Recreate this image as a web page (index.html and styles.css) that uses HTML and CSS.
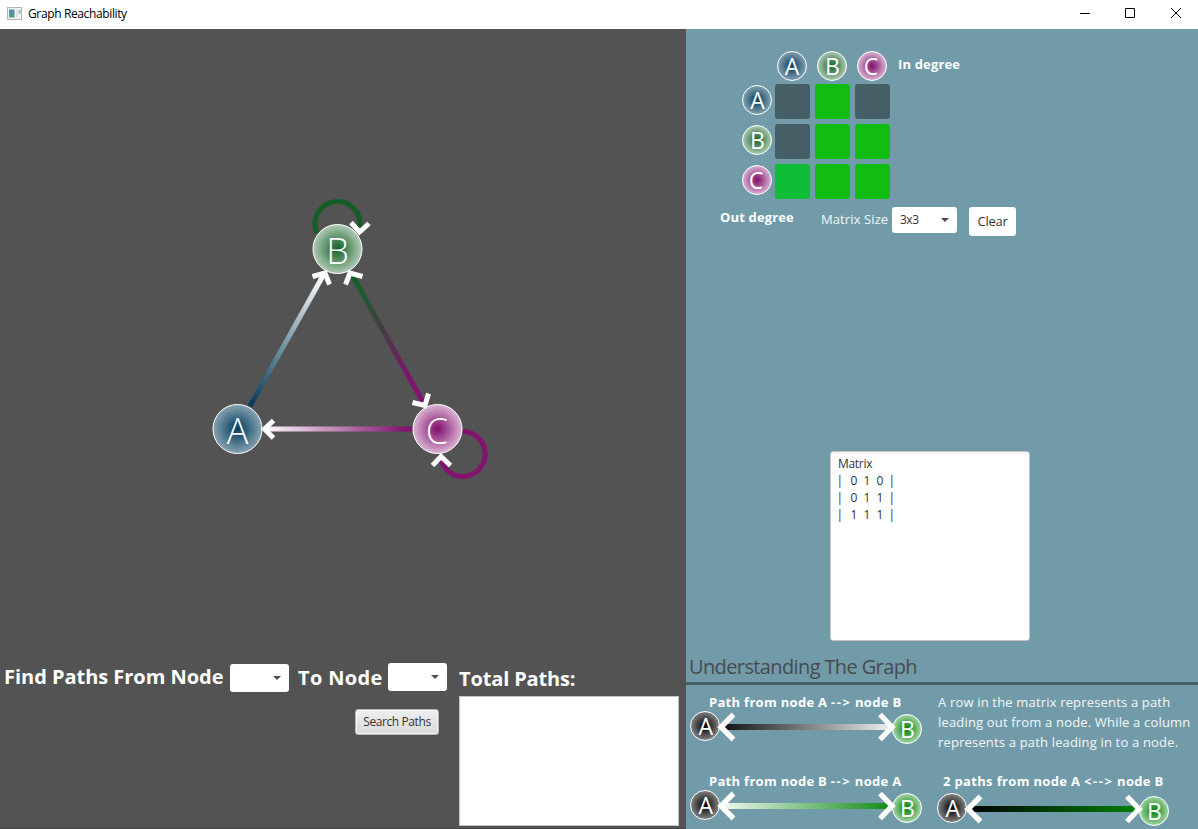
FILE: index.html
```html
<!DOCTYPE html>
<html lang="en">
<head>
<meta charset="utf-8">
<title>Graph Reachability</title>
<link rel="stylesheet" href="styles.css">
</head>
<body>
<svg class="defs" width="0" height="0" aria-hidden="true">
  <defs>
    <radialGradient id="ga"><stop offset="0" stop-color="#0a4060"/><stop offset=".25" stop-color="#205270"/><stop offset="1" stop-color="#87a3b1"/></radialGradient>
    <radialGradient id="gb"><stop offset="0" stop-color="#176327"/><stop offset=".2" stop-color="#2f7440"/><stop offset="1" stop-color="#b0cbb5"/></radialGradient>
    <radialGradient id="gc"><stop offset="0" stop-color="#83126f"/><stop offset=".2" stop-color="#902d7f"/><stop offset="1" stop-color="#dab5d3"/></radialGradient>
    <radialGradient id="gk"><stop offset="0" stop-color="#000"/><stop offset=".25" stop-color="#1c1c1c"/><stop offset="1" stop-color="#858585"/></radialGradient>
    <radialGradient id="gg"><stop offset="0" stop-color="#0b870f"/><stop offset=".25" stop-color="#259429"/><stop offset="1" stop-color="#a8d5aa"/></radialGradient>
    <g id="heads" fill="none" stroke="#fff" stroke-width="5.4"><path d="M733.5 714.5L721 727L733.5 739.5M880 714.5L892 727L880 739.5"/></g>
    <g id="ends">
      <circle cx="705" cy="726" r="14.5" fill="url(#gk)" stroke="#fff"/>
      <circle cx="907" cy="729" r="14.5" fill="url(#gg)" stroke="#fff"/>
      <text class="small-letter" x="705.8" y="734.5">A</text>
      <text class="small-letter" x="907.500" y="737.5">B</text>
    </g>
  </defs>
</svg>

<header class="titlebar">
  <svg class="app-icon" width="15" height="13" viewBox="0 0 15 13">
    <defs><linearGradient id="ic" x2="0" y2="1"><stop stop-color="#5a86b8"/><stop offset="1" stop-color="#4ba37c"/></linearGradient></defs>
    <rect x=".5" y=".5" width="14" height="12" fill="#f4f4f4" stroke="#b0b4b8"/>
    <rect x="2" y="2.5" width="5.5" height="8" fill="url(#ic)"/>
    <rect x="8.500" y="2.500" width="3" height="8" fill="#dfe3e6"/>
    <rect x="12" y="3" width="1.500" height="3.500" fill="#7cb79c"/>
  </svg>
  <span class="app-name">Graph Reachability</span>
  <svg class="win-buttons" width="104" height="12" viewBox="0 0 104 12" fill="none" stroke="#000">
    <path d="M0 6.500H10M45.500 1.500H54.500V10.500H45.500Z"/><path d="M91 1L101 11M101 1L91 11"/>
  </svg>
</header>

<main class="app">
  <section class="left">
    <svg class="graph" width="686" height="620" viewBox="0 29 686 620">
      <defs>
        <linearGradient id="lab" gradientUnits="userSpaceOnUse" x1="250" y1="406" x2="324" y2="275"><stop offset="0" stop-color="#04395b"/><stop offset="1" stop-color="#fff"/></linearGradient>
        <linearGradient id="lbc" gradientUnits="userSpaceOnUse" x1="350" y1="273" x2="425" y2="406"><stop offset=".15" stop-color="#185c29"/><stop offset=".8" stop-color="#80136e"/></linearGradient>
        <linearGradient id="lca" gradientUnits="userSpaceOnUse" x1="262" y1="0" x2="412" y2="0"><stop offset="0" stop-color="#fff"/><stop offset=".95" stop-color="#84126f"/></linearGradient>
      </defs>
      <g fill="none" stroke-width="5">
        <path d="M250 406L324 274" stroke="url(#lab)"/>
        <path d="M351 273L424 404" stroke="url(#lbc)"/>
        <rect x="264" y="426.500" width="149" height="5" fill="url(#lca)" stroke="none"/>
        <path d="M317 233.300A22.500 22.500 0 1 1 359.700 227.300" stroke="#155d26"/>
        <path d="M462.500 431.500A22.500 22.500 0 1 1 441 460" stroke="#83136f"/>
      </g>
      <circle cx="237.500" cy="429" r="24.500" fill="url(#ga)" stroke="#fff"/>
      <circle cx="337.500" cy="249" r="24.500" fill="url(#gb)" stroke="#fff"/>
      <circle cx="437.500" cy="429" r="24.500" fill="url(#gc)" stroke="#fff"/>
      <g fill="none" stroke="#fff" stroke-width="5">
        <path d="M312.500 276.500L325 273L329.500 284.500" />
        <path d="M345.500 284.500L350 273L362.500 276.500"/>
        <path d="M412.500 402.500L425 405.500L428.500 393.500"/>
        <path d="M273.500 420.500L264.500 429L273.500 438"/>
        <path d="M351 222.500L359.500 232L369 223.500"/>
        <path d="M432.500 465.500L441 456.500L450.500 465.500"/>
      </g>
      <text class="big-letter" x="237.500" y="444">A</text>
      <text class="big-letter" x="337.500" y="263.500">B</text>
      <text class="big-letter" x="437" y="444">C</text>
    </svg>

    <div class="finder">
      <div class="finder-form">
        <div class="finder-row">
          <span class="label from-label">Find Paths From Node</span>
          <div class="select node-select"><i class="caret"></i></div>
          <span class="label to-label">To Node</span>
          <div class="select node-select to-select"><i class="caret"></i></div>
        </div>
        <button class="search">Search Paths</button>
      </div>
      <div class="totals">
        <span class="label">Total Paths:</span>
        <div class="paths-box"></div>
      </div>
    </div>
  </section>

  <section class="right">
    <div class="matrix-area">
      <div class="matrix">
        <span></span>
        <svg class="chip" viewBox="0 0 30 30"><circle cx="15" cy="15" r="14.500" fill="url(#ga)" stroke="#fff"/><text class="small-letter" x="15" y="23.500">A</text></svg>
        <svg class="chip" viewBox="0 0 30 30"><circle cx="15" cy="15" r="14.500" fill="url(#gb)" stroke="#fff"/><text class="small-letter" x="15.500" y="23.500">B</text></svg>
        <svg class="chip" viewBox="0 0 30 30"><circle cx="15" cy="15" r="14.500" fill="url(#gc)" stroke="#fff"/><text class="small-letter" x="14" y="23.500">C</text></svg>
        <svg class="chip row-chip" viewBox="0 0 30 30"><circle cx="15" cy="15" r="14.500" fill="url(#ga)" stroke="#fff"/><text class="small-letter" x="15.500" y="23.500">A</text></svg>
        <i class="cell"></i><i class="cell on"></i><i class="cell"></i>
        <svg class="chip row-chip" viewBox="0 0 30 30"><circle cx="15" cy="15" r="14.500" fill="url(#gb)" stroke="#fff"/><text class="small-letter" x="15.500" y="23.500">B</text></svg>
        <i class="cell"></i><i class="cell on"></i><i class="cell on"></i>
        <svg class="chip row-chip" viewBox="0 0 30 30"><circle cx="15" cy="15" r="14.500" fill="url(#gc)" stroke="#fff"/><text class="small-letter" x="14" y="23.500">C</text></svg>
        <i class="cell on hover"></i><i class="cell on"></i><i class="cell on"></i>
      </div>
      <span class="caption">In degree</span>
    </div>
    <div class="controls">
      <span class="caption out">Out degree</span>
      <span class="size-label">Matrix Size</span>
      <div class="select size-select"><span class="size-value">3x3</span><i class="caret"></i></div>
      <button class="clear">Clear</button>
    </div>
    <pre class="output">Matrix
<span class="bar">|</span><span class="n">0</span><span class="n">1</span><span class="n">0</span><span class="bar end">|</span>
<span class="bar">|</span><span class="n">0</span><span class="n">1</span><span class="n">1</span><span class="bar end">|</span>
<span class="bar">|</span><span class="n">1</span><span class="n">1</span><span class="n">1</span><span class="bar end">|</span></pre>
    <h2 class="heading">Understanding The Graph</h2>
    <div class="legend">
      <figure class="item">
        <figcaption class="caption">Path from node A <span class="arrow">--&gt;</span> node B</figcaption>
        <svg class="diagram" width="234" height="34" viewBox="689 710 234 34">
          <defs><linearGradient id="l1"><stop stop-color="#101010"/><stop offset="1" stop-color="#eee"/></linearGradient></defs>
          <rect x="722" y="724" width="168" height="6" fill="url(#l1)"/><use href="#ends"/><use href="#heads"/>
        </svg>
      </figure>
      <p class="note">A row in the matrix represents a path<br>leading out from a node. While a column<br>represents a path leading in to a node.</p>
      <figure class="item">
        <figcaption class="caption">Path from node B <span class="arrow">--&gt;</span> node A</figcaption>
        <svg class="diagram" width="234" height="34" viewBox="689 710 234 34">
          <defs><linearGradient id="l2"><stop stop-color="#f0f8f0"/><stop offset="1" stop-color="#128c17"/></linearGradient></defs>
          <rect x="722" y="724" width="168" height="6" fill="url(#l2)"/><use href="#ends"/><use href="#heads"/>
        </svg>
      </figure>
      <figure class="item both">
        <figcaption class="caption">2 paths from node A <span class="arrow">&lt;--&gt;</span> node B</figcaption>
        <svg class="diagram" width="234" height="34" viewBox="689 710 234 34">
          <defs><linearGradient id="l3"><stop stop-color="#000"/><stop offset="1" stop-color="#058009"/></linearGradient></defs>
          <rect x="722" y="724" width="168" height="6" fill="url(#l3)"/><use href="#ends"/><use href="#heads"/>
        </svg>
      </figure>
    </div>
  </section>
</main>
</body>
</html>
```

FILE: styles.css
```css
* { box-sizing: border-box; }
body { margin: 0; width: 1198px; height: 829px; overflow: hidden; font-family: "Open Sans", "Noto Sans", sans-serif; background: #fff; }
.defs { position: absolute; }
.titlebar { height: 29px; display: flex; align-items: center; padding: 0 14px 3px 7px; font-size: 12px; color: #000; }
.app-icon { margin-right: 6px; }
.app-name { letter-spacing: -0.37px; }
.win-buttons { margin-left: auto; }
.app { display: flex; height: 800px; }
.left { width: 686px; background: #535353; border-bottom: 1px solid #474747; display: flex; flex-direction: column; }
.graph { display: block; flex: none; }
.big-letter, .small-letter { fill: #fff; text-anchor: middle; font-family: "Open Sans", sans-serif; font-stretch: 88%; }
.big-letter { font-size: 36px; font-weight: 360; }
.small-letter { font-size: 23px; font-weight: 400; }
.finder { display: flex; padding-left: 4px; }
.finder-form { width: 455px; padding-top: 12px; }
.finder-row { display: flex; align-items: flex-start; height: 48px; }
.label { color: #fff; font-weight: 700; font-size: 20px; line-height: 28px; white-space: pre; letter-spacing: -0.15px; }
.from-label { width: 226px; margin-top: 2px; letter-spacing: -0.03px; }
.to-label { width: 90px; margin-top: 3px; letter-spacing: 0.35px; }
.select { background: #fff; border-radius: 3px; display: flex; align-items: center; justify-content: flex-end; }
.node-select { width: 59px; height: 28px; margin-top: 3px; padding-right: 8px; }
.to-select { margin-top: 2px; }
.from-label + .node-select { margin-right: 9px; }
.caret { width: 0; height: 0; border: 4px solid transparent; border-top-color: #4c4c4c; border-bottom: 0; }
.search { display: block; margin-left: 351px; width: 84px; height: 26px; padding: 0 0 2px; border: 1px solid #b4b4b4; border-radius: 3px; background: linear-gradient(#efefef, #d9d9d9); box-shadow: inset 0 0 0 1px #f6f6f6; font: 12px "Open Sans", sans-serif; letter-spacing: -0.4px; color: #333; white-space: nowrap; }
.totals { padding-top: 16px; }
.totals .label { display: block; height: 31px; }
.paths-box { width: 220px; height: 130px; background: #fff; border: 1px solid #c4c4c4; }
.right { width: 512px; background: #729baa; }
.matrix-area { display: flex; padding: 22px 0 0 54px; height: 178px; }
.matrix { display: grid; grid-template-columns: 30px 35px 35px 35px; grid-template-rows: 28px 35px 35px 35px; gap: 5px; margin-right: 8px; }
.chip { width: 30px; height: 30px; margin-left: 2px; overflow: visible; }
.row-chip { margin-top: 1px; }
.cell { display: block; background: #465e66; border-radius: 3px; }
.cell.on { background: #12bd12; }
.cell.on.hover { background: #0fbd36; }
.caption { color: #fff; font-weight: 700; font-size: 13px; line-height: 20px; letter-spacing: 0.15px; white-space: pre; }
.matrix-area .caption { margin-top: 3px; }
.controls { display: flex; align-items: flex-start; padding-left: 34px; height: 244px; }
.controls .out { width: 101px; }
.size-label { width: 71px; margin-top: 2px; color: #f3f7f8; font-size: 13px; line-height: 20px; white-space: pre; letter-spacing: 0.1px; }
.size-select { width: 65px; height: 26px; padding: 0 8px; justify-content: space-between; font-size: 12px; color: #333; letter-spacing: -0.5px; }
.size-value { margin-top: -2px; }
.clear { width: 47px; height: 29px; margin-left: 12px; padding: 0 0 2px; border: 0; border-radius: 3px; background: #fff; font: 13px "Open Sans", sans-serif; letter-spacing: -0.3px; color: #333; }
.output { width: 200px; height: 190px; margin: 0 0 0 144px; padding: 3px 7px; border: 1px solid #c4c4c4; border-radius: 3px; background: linear-gradient(#f3f3f3, #fff 4px); font: 12px/17px "Open Sans", sans-serif; letter-spacing: -0.3px; color: #333; }
.output span { display: inline-block; }
.output .bar { width: 14px; margin-left: -1.5px; }
.output .end { margin-left: -1px; }
.output .n { width: 13px; }
.heading { margin: 0; height: 44px; padding: 10px 0 0 3px; border-bottom: 3px solid #47616b; font-weight: 400; font-size: 20px; line-height: 32px; letter-spacing: -0.62px; color: #474b4d; }
.legend { display: grid; grid-template-columns: 247px 1fr; grid-template-rows: 79px 60px; padding: 7px 0 0 3px; }
.item { margin: 0; }
.item .caption { padding-left: 20px; height: 18px; letter-spacing: 0.3px; }
.item .arrow { letter-spacing: 1.5px; }
.item.both .caption { padding-left: 7px; height: 21px; letter-spacing: 0.34px; }
.diagram { display: block; }
.note { margin: 0 0 0 2px; color: #f3f7f8; font-size: 13px; line-height: 20px; letter-spacing: 0.17px; white-space: nowrap; }
```
